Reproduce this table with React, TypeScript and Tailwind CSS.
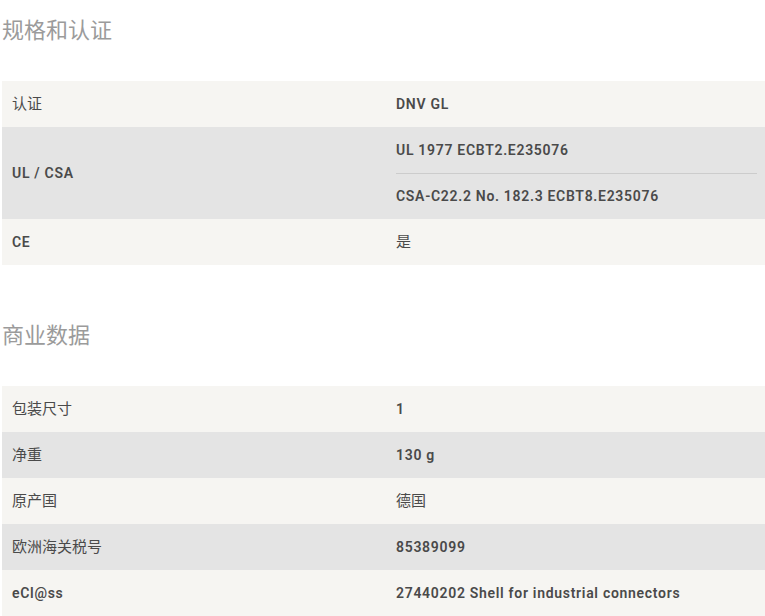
type Row = { label: string; values: string[] };

const certRows: Row[] = [
  { label: "认证", values: ["DNV GL"] },
  { label: "UL / CSA", values: ["UL 1977 ECBT2.E235076", "CSA-C22.2 No. 182.3 ECBT8.E235076"] },
  { label: "CE", values: ["是"] },
];

const commercialRows: Row[] = [
  { label: "包装尺寸", values: ["1"] },
  { label: "净重", values: ["130 g"] },
  { label: "原产国", values: ["德国"] },
  { label: "欧洲海关税号", values: ["85389099"] },
  { label: "eCl@ss", values: ["27440202 Shell for industrial connectors"] },
];

// CJK text renders regular and a touch larger, latin text semi-bold
const textStyle = (s: string) =>
  /[\u4e00-\u9fff]/.test(s) ? "text-[15px] font-normal" : "text-[14px] font-semibold tracking-[0.7px]";

function SpecTable({ rows }: { rows: Row[] }) {
  return (
    <div className="ml-[2px]">
      {rows.map((row, i) => (
        <div
          key={row.label}
          className={`grid grid-cols-[384px_1fr] ${i % 2 === 0 ? "bg-[#f6f5f2]" : "bg-[#e4e4e4]"}`}
        >
          <div className={`flex items-center px-2.5 text-[#4a4a4a] ${textStyle(row.label)}`}>
            {row.label}
          </div>
          <div className="pl-2.5 pr-2">
            {row.values.map((v, j) => (
              <div
                key={v}
                className={`flex h-[46px] items-center text-[#4a4a4a] ${textStyle(v)} ${j > 0 ? "border-t border-[#cccccc]" : ""}`}
              >
                {v}
              </div>
            ))}
          </div>
        </div>
      ))}
    </div>
  );
}

export default function App() {
  return (
    <div className="w-[765px] bg-white font-['Roboto','Noto_Sans_CJK_SC',sans-serif]">
      <h2 className="pl-[2px] pt-[17px] text-[22px] leading-[28px] font-normal text-[#9b9b9b]">规格和认证</h2>
      <div className="mt-[36px]">
        <SpecTable rows={certRows} />
      </div>
      <h2 className="mt-[57px] pl-[2px] text-[22px] leading-[28px] font-normal text-[#9b9b9b]">商业数据</h2>
      <div className="mt-[36px]">
        <SpecTable rows={commercialRows} />
      </div>
    </div>
  );
}
